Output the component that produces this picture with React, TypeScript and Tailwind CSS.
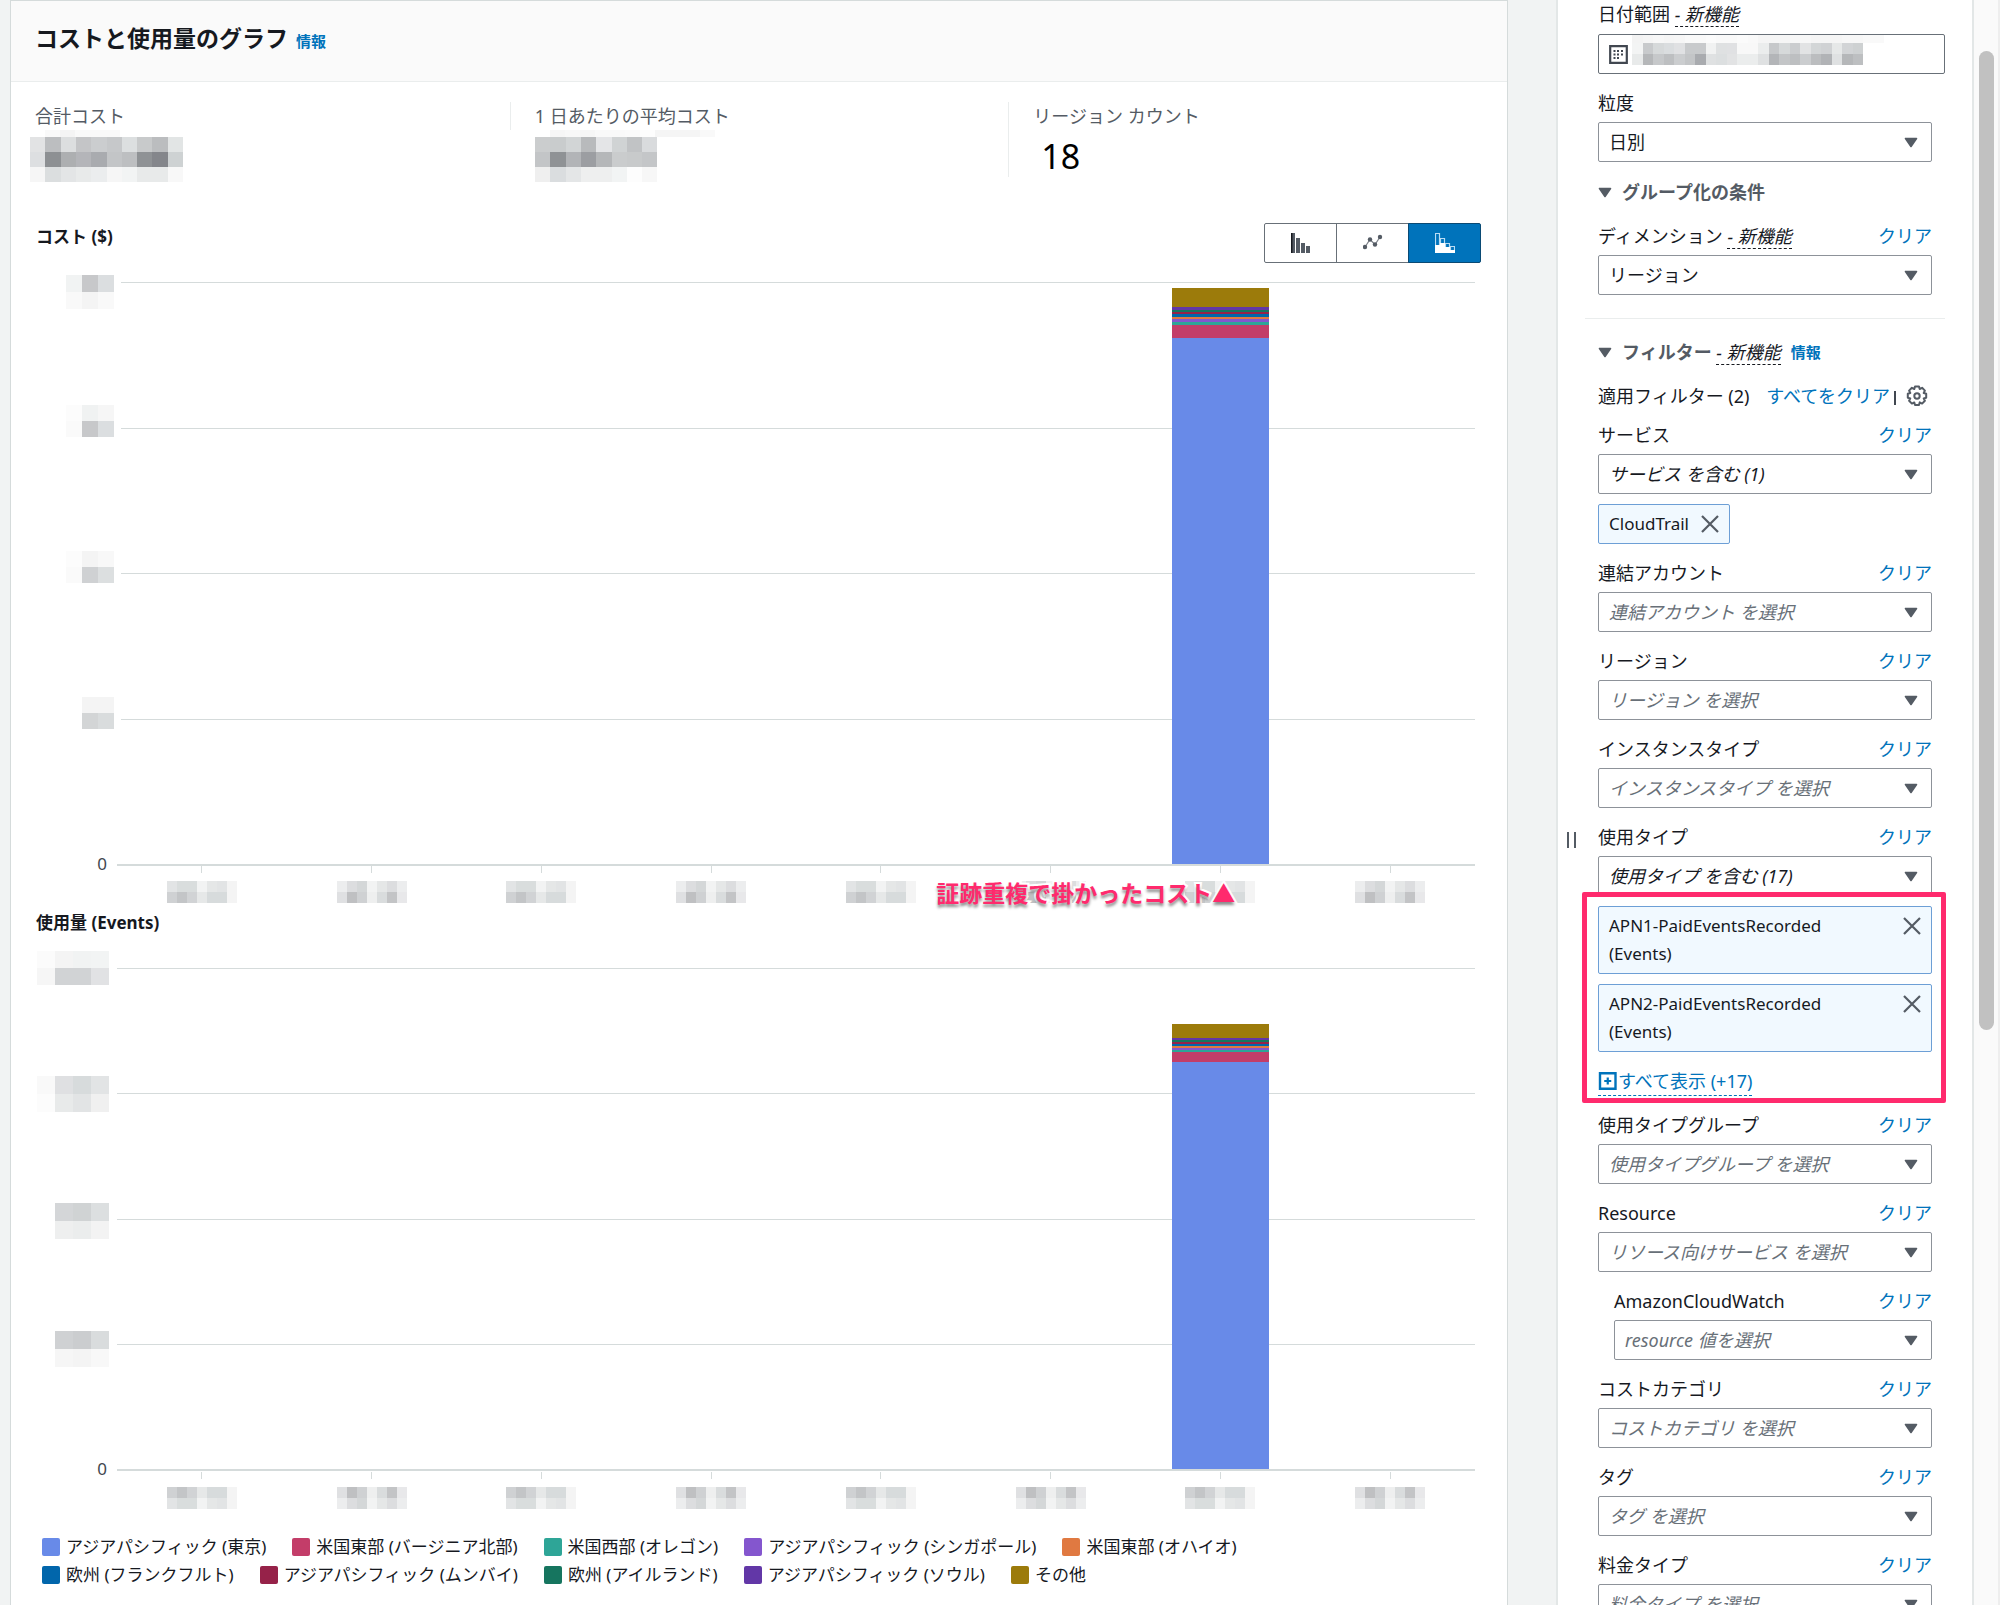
import { useState } from 'react';
import clsx from 'clsx';

type PixelBlock = {
  x: number;
  y: number;
  cellWidth: number;
  cellHeight: number;
  rows: string[][];
};

type Segment = {
  color: string;
  height: number;
};

type Field = {
  id: string;
  label: string;
  value: string;
  filled?: boolean;
  italic?: boolean;
  nested?: boolean;
  tags?: string[];
  showAll?: string;
};

const COLORS = {
  tokyo: '#688ae8',
  virginia: '#c33d69',
  oregon: '#2ea597',
  singapore: '#8456ce',
  ohio: '#e07941',
  frankfurt: '#0166ab',
  mumbai: '#962249',
  ireland: '#16755f',
  seoul: '#6237a7',
  other: '#9c7b0b',
};

const LEGEND = [
  [
    { label: 'アジアパシフィック (東京)', color: COLORS.tokyo },
    { label: '米国東部 (バージニア北部)', color: COLORS.virginia },
    { label: '米国西部 (オレゴン)', color: COLORS.oregon },
    { label: 'アジアパシフィック (シンガポール)', color: COLORS.singapore },
    { label: '米国東部 (オハイオ)', color: COLORS.ohio },
  ],
  [
    { label: '欧州 (フランクフルト)', color: COLORS.frankfurt },
    { label: 'アジアパシフィック (ムンバイ)', color: COLORS.mumbai },
    { label: '欧州 (アイルランド)', color: COLORS.ireland },
    { label: 'アジアパシフィック (ソウル)', color: COLORS.seoul },
    { label: 'その他', color: COLORS.other },
  ],
];

const COST_BAR: Segment[] = [
  { color: COLORS.other, height: 19 },
  { color: COLORS.seoul, height: 3 },
  { color: COLORS.ireland, height: 2 },
  { color: COLORS.mumbai, height: 2 },
  { color: COLORS.frankfurt, height: 3 },
  { color: COLORS.ohio, height: 2 },
  { color: COLORS.singapore, height: 3 },
  { color: COLORS.oregon, height: 3 },
  { color: COLORS.virginia, height: 13 },
  { color: COLORS.tokyo, height: 526 },
];

const USAGE_BAR: Segment[] = [
  { color: COLORS.other, height: 14 },
  { color: COLORS.seoul, height: 2 },
  { color: COLORS.ireland, height: 2 },
  { color: COLORS.mumbai, height: 2 },
  { color: COLORS.frankfurt, height: 2 },
  { color: COLORS.ohio, height: 2 },
  { color: COLORS.singapore, height: 2 },
  { color: COLORS.oregon, height: 2 },
  { color: COLORS.virginia, height: 10 },
  { color: COLORS.tokyo, height: 407 },
];

// masked values
const TOTAL_MASK: PixelBlock[] = [
  { x: 15, y: 0, cellWidth: 15, cellHeight: 7, rows: [['#f9f9f9', '#f4f4f4', '#f9f9f9', '#f9f9f9', '#f9f9f9']] },
  {
    x: 0,
    y: 7,
    cellWidth: 15.3,
    cellHeight: 15,
    rows: [
      ['#e2e3e4', '#bcbec0', '#dcdedf', '#c4c5c7', '#cbcdcf', '#c6c8ca', '#dcdfe0', '#c8cacb', '#bbbdbf', '#e2e5e5'],
      ['#dddfe1', '#8d9093', '#adafb1', '#b4b5b9', '#a9abaf', '#c3c5c7', '#bdbfc1', '#8f9295', '#84868b', '#ced2d3'],
      ['#f6f6f6', '#dbdedf', '#e3e5e6', '#e8eaea', '#ebedee', '#f6f6f6', '#f2f4f4', '#e8eaea', '#e8eaea', '#f8f8f8'],
    ],
  },
];

const AVERAGE_MASK: PixelBlock[] = [
  { x: 15, y: 0, cellWidth: 15, cellHeight: 7, rows: [['#f6f6f6', '#f8f8f8', '#f6f6f6', '#f9f9f9', '#f9f9f9', '#fafafa', '#fdfdfd', '#f5f5f5', '#f5f5f5', '#f5f5f5', '#f9f9f9']] },
  {
    x: 0,
    y: 7,
    cellWidth: 15.3,
    cellHeight: 15,
    rows: [
      ['#cbcdce', '#c9cccd', '#d2d5d6', '#b8babc', '#e4e5e7', '#d0d3d4', '#c1c3c5', '#d9dbdd'],
      ['#c3c5c7', '#8f9295', '#b2b4b7', '#9c9ea2', '#b5b7b9', '#cacccd', '#c8cacb', '#c4c6c8'],
      ['#efefef', '#dadddf', '#e4e6e7', '#eeefef', '#eeefef', '#f2f4f4', '#fdfdfd', '#f7f7f7'],
    ],
  },
];

const DATE_MASK: PixelBlock[] = [
  {
    x: 0,
    y: 0,
    cellWidth: 10.5,
    cellHeight: 8,
    rows: [
      ['#f3f3f3', '#f5f5f5', '#f7f7f7', '#f5f5f5', '#f6f6f6', '#f9f9f9', '#f9f9f9', '#fbfbfb', '#f9f9f9', '#f9f9f9', '#fbfbfb', '#f9f9f9', '#f5f5f5', '#f5f5f5', '#f5f5f5', '#f7f7f7', '#f7f7f7', '#f5f5f5', '#f5f5f5', '#f5f5f5', '#f7f7f7', '#f7f7f7', '#f9f9f9', '#f9f9f9'],
    ],
  },
  {
    x: 0,
    y: 8,
    cellWidth: 10.5,
    cellHeight: 11,
    rows: [
      ['#f3f4f4', '#c8cacc', '#d6d9da', '#dadddf', '#e0e1e3', '#c8cacc', '#c8cacc', '#f1f2f2', '#dfe1e2', '#e0e1e3', '#f8f8f8', '#f8f8f8', '#ebeded', '#c6c8ca', '#d6d9da', '#cbcdcf', '#e2e3e4', '#d3d6d7', '#d0d2d4', '#e6e8e8', '#d2d4d6', '#ced1d2'],
      ['#e8eaea', '#b5b7b9', '#c6c8ca', '#bdbfc1', '#cbcdcf', '#c3c5c7', '#a9abaf', '#dfe1e2', '#dcdfe0', '#e2e3e4', '#ebeded', '#ebeded', '#dfe1e2', '#b3b5b8', '#c3c5c7', '#bdbfc1', '#cbcdcf', '#bbbdbf', '#b1b3b6', '#dfe1e2', '#b5b7b9', '#bdbfc1'],
    ],
  },
];

const COST_AXIS_MASK: PixelBlock[] = [
  { x: 30, y: 0, cellWidth: 16, cellHeight: 17, rows: [['#f1f3f3', '#c7c8ca', '#dbdee0'], ['#f9f9f9', '#f4f4f4', '#f9f9f9']] },
  { x: 30, y: 130, cellWidth: 16, cellHeight: 16, rows: [['#fcfcfc', '#f0f2f2', '#f6f6f6'], ['#fafafa', '#c7c8ca', '#dbdee0']] },
  { x: 30, y: 276, cellWidth: 16, cellHeight: 16, rows: [['#fcfcfc', '#f4f4f4', '#f8f8f8'], ['#fafafa', '#cfd1d3', '#dcdfe0']] },
  { x: 46, y: 422, cellWidth: 16, cellHeight: 16, rows: [['#f4f4f4', '#f4f4f4'], ['#d3d5d6', '#d9dcdd']] },
];

const USAGE_AXIS_MASK: PixelBlock[] = [
  { x: 1, y: 0, cellWidth: 18, cellHeight: 17, rows: [['#fbfbfb', '#f4f4f4', '#f1f3f3', '#f2f4f4'], ['#f6f6f6', '#d1d3d5', '#d1d3d5', '#e1e2e4']] },
  { x: 1, y: 125, cellWidth: 18, cellHeight: 18, rows: [['#f9f9f9', '#dfe0e2', '#d7dbdc', '#e2e4e5'], ['#fcfcfc', '#e8eaea', '#e2e4e5', '#f0f0f0']] },
  { x: 19, y: 252, cellWidth: 18, cellHeight: 18, rows: [['#d4d6d8', '#d0d3d4', '#dcdfe0'], ['#eeefef', '#ebeded', '#f3f3f3']] },
  { x: 19, y: 380, cellWidth: 18, cellHeight: 18, rows: [['#cfd1d3', '#cbcdcf', '#d9dcdd'], ['#f6f6f6', '#f4f4f4', '#f8f8f8']] },
];

const DAY_TOP = [
  ['#e2e4e5', '#d9dddd', '#d9dddd', '#f2f3f3', '#e5e7e7', '#e2e4e5', '#f4f4f4'],
  ['#ecedee', '#dcdddf', '#d4d7d8', '#f2f3f3', '#e5e7e7', '#dcdddf', '#ecedee'],
];

const DAY_BOTTOM = [
  ['#cfd1d3', '#c3c5c7', '#d1d3d5', '#e6e8e8', '#d7dbdc', '#d7dbdc', '#f4f4f4'],
  ['#dfe0e2', '#bfc0c2', '#cfd1d3', '#eeefef', '#d9dcdd', '#c3c4c6', '#e8e8ea'],
];

const DAYS = ['1', '2', '3', '4', '5', '6', '7', '8'];

const FILTERS: Field[] = [
  { id: 'service', label: 'サービス', value: 'サービス を含む (1)', filled: true, italic: true, tags: ['CloudTrail'] },
  { id: 'account', label: '連結アカウント', value: '連結アカウント を選択', italic: true },
  { id: 'region', label: 'リージョン', value: 'リージョン を選択', italic: true },
  { id: 'instance', label: 'インスタンスタイプ', value: 'インスタンスタイプ を選択', italic: true },
  {
    id: 'usage-type',
    label: '使用タイプ',
    value: '使用タイプ を含む (17)',
    filled: true,
    italic: true,
    tags: ['APN1-PaidEventsRecorded (Events)', 'APN2-PaidEventsRecorded (Events)'],
    showAll: 'すべて表示 (+17)',
  },
  { id: 'usage-group', label: '使用タイプグループ', value: '使用タイプグループ を選択', italic: true },
  { id: 'resource', label: 'Resource', value: 'リソース向けサービス を選択', italic: true },
  { id: 'cloudwatch', label: 'AmazonCloudWatch', value: 'resource 値を選択', italic: true, nested: true },
  { id: 'category', label: 'コストカテゴリ', value: 'コストカテゴリ を選択', italic: true },
  { id: 'tag', label: 'タグ', value: 'タグ を選択', italic: true },
  { id: 'charge', label: '料金タイプ', value: '料金タイプ を選択', italic: true },
];

const Mosaic = ({ blocks, width, height }: { blocks: PixelBlock[]; width: number; height: number }) => (
  <svg width={width} height={height} shapeRendering="crispEdges" aria-hidden="true" className="shrink-0">
    {blocks.map((block) =>
      block.rows.map((row, r) =>
        row.map((fill, c) => (
          <rect
            key={`${block.x}-${block.y}-${r}-${c}`}
            x={block.x + c * block.cellWidth}
            y={block.y + r * block.cellHeight}
            width={block.cellWidth}
            height={block.cellHeight}
            fill={fill}
          />
        ))
      )
    )}
  </svg>
);

const Caret = () => (
  <svg width="14" height="11" viewBox="0 0 14 11" aria-hidden="true" className="shrink-0">
    <path d="M1.5 1.5h11L7 9.5z" fill="#545b64" stroke="#545b64" strokeWidth="1.6" strokeLinejoin="round" />
  </svg>
);

const Cross = () => (
  <svg width="18" height="18" viewBox="0 0 18 18" aria-hidden="true">
    <path d="M1 1l16 16M17 1L1 17" fill="none" stroke="#545b64" strokeWidth="2.2" />
  </svg>
);

const BarsIcon = () => (
  <svg width="20" height="20" viewBox="0 0 20 20" aria-hidden="true">
    <path d="M0 0h4v20H0zM5 5h4v15H5zM10 10h4v10h-4zM15 13h4v7h-4z" fill="#545b64" />
    <path d="M0 0h1.5v20H0z" fill="#16191f" />
  </svg>
);

const LineIcon = () => (
  <svg width="20" height="20" viewBox="0 0 20 20" aria-hidden="true">
    <path d="M2 14l5-7.5 5 5L17 4" fill="none" stroke="#7d828a" strokeWidth="1.2" />
    <g fill="#545b64">
      <circle cx="2" cy="14" r="2.2" />
      <circle cx="7" cy="6.5" r="2.2" />
      <circle cx="12" cy="11.5" r="2.2" />
      <circle cx="17" cy="4" r="2.2" />
    </g>
  </svg>
);

const StackIcon = () => (
  <svg width="20" height="20" viewBox="0 0 20 20" aria-hidden="true">
    <path
      d="M.5.5h4v19h-4zM5.5 5.5h4v14h-4zM10.500 10.500h4v9h-4zM15.500 13.500h4v6h-4z"
      fill="none"
      stroke="#b9dbf3"
      strokeWidth="1.2"
    />
    <path d="M0 12h5v8H0zM5 10h5v10H5zM10 14h5v6h-5zM15 17h5v3h-5z" fill="#fff" />
  </svg>
);

const NewFeature = () => (
  <span className="border-b border-dashed border-[#16191f] font-normal text-[#16191f] italic">
    - 新機能
  </span>
);

const ClearButton = ({ label = 'クリア' }: { label?: string }) => (
  <button type="button" className="text-[#0073bb]">
    {label}
  </button>
);

const Select = ({ field }: { field: Field }) => (
  <div className="relative">
    <select
      id={field.id}
      defaultValue=""
      className={clsx(
        'block h-10 w-full appearance-none rounded-xs border border-[#8d9299] bg-white px-2.5 pr-10',
        field.italic && 'italic',
        field.filled || !field.italic ? 'text-[#16191f]' : 'text-[#687078]'
      )}
    >
      <option value="">{field.value}</option>
    </select>
    <span className="pointer-events-none absolute inset-y-0 right-3.5 flex items-center">
      <Caret />
    </span>
  </div>
);

const Tags = ({ tags, showAll }: { tags: string[]; showAll?: string }) => (
  <div className="relative mt-2.5">
    <ul className="flex flex-col items-start gap-2.5 text-[17px]">
      {tags.map((tag) => (
        <li
          key={tag}
          className={clsx(
            'flex items-start justify-between gap-3 rounded-xs border border-[#6d9fd6] bg-[#f1f9ff] px-2.5 py-[5px] leading-7',
            showAll && 'w-full'
          )}
        >
          <span className={clsx(showAll && 'w-60')}>{tag}</span>
          <button type="button" aria-label={`${tag} を削除`} className="flex h-7 items-center">
            <Cross />
          </button>
        </li>
      ))}
    </ul>
    {showAll && (
      <>
        <button
          type="button"
          className="mt-[15px] flex h-[29px] items-center border-b border-dashed border-[#0073bb] text-[#0073bb]"
        >
          <svg width="20" height="18" viewBox="0 0 20 18" aria-hidden="true">
            <path d="M2 1.200h15.500v15.500H2z" fill="none" stroke="#0073bb" strokeWidth="2.400" />
            <path d="M9.750 5.500v7M6.250 9h7" fill="none" stroke="#0073bb" strokeWidth="2.200" />
          </svg>
          {showAll}
        </button>
        {/* highlight frame */}
        <div className="pointer-events-none absolute -top-3.5 -right-3.5 -bottom-[7px] -left-4 rounded-xs border-5 border-[#ff2a6d]" />
      </>
    )}
  </div>
);

const FilterField = ({ field }: { field: Field }) => (
  <div className={clsx('flex flex-col', field.nested && 'pl-4')}>
    <div className="mb-[5px] flex justify-between">
      <label htmlFor={field.id}>{field.label}</label>
      <ClearButton />
    </div>
    <Select field={field} />
    {field.tags && <Tags tags={field.tags} showAll={field.showAll} />}
  </div>
);

const DayLabels = ({ rows, annotation }: { rows: string[][][]; annotation?: string }) => (
  <ul className="grid grid-cols-8">
    {DAYS.map((day, i) => (
      <li key={day} className="relative flex flex-col items-center">
        <span className="h-[7px] w-px bg-[#d5dbdb]" />
        <div className="pt-2">
          <Mosaic
            width={74}
            height={22}
            blocks={[
              { x: 2, y: 0, cellWidth: 10, cellHeight: 11, rows: [rows[0][i % 2], rows[1][i % 2]] },
            ]}
          />
        </div>
        {annotation && i === 6 && (
          <strong className="absolute top-2.5 right-[70px] font-['Noto_Sans_CJK_JP',sans-serif] text-[23px] leading-8 whitespace-nowrap text-[#ff2a6d] [paint-order:stroke_fill] [-webkit-text-stroke:4px_white] [text-shadow:0_3px_3px_rgb(0_0_0/0.45)]">
            {annotation}
          </strong>
        )}
      </li>
    ))}
  </ul>
);

const Plot = ({ segments, className, inset }: { segments: Segment[]; className: string; inset?: boolean }) => (
  <div className={clsx('grid border-b-2 border-[#d5dbdb]', className)}>
    <div className={clsx('col-start-1 row-start-1 grid grid-rows-4', inset && 'ml-1')}>
      <div className="border-t border-[#d5dbdb]" />
      <div className="border-t border-[#d5dbdb]" />
      <div className="border-t border-[#d5dbdb]" />
      <div className="border-t border-[#d5dbdb]" />
    </div>
    <div className="col-start-1 row-start-1 grid grid-cols-8">
      <div className="col-start-7 flex flex-col items-center justify-end">
        {segments.map(({ color, height }) => (
          <div key={color} className="w-[57%]" style={{ height, backgroundColor: color }} />
        ))}
      </div>
    </div>
  </div>
);

const CHART_TYPES = [
  { id: 'bar', label: '棒グラフ', icon: <BarsIcon /> },
  { id: 'line', label: '折れ線グラフ', icon: <LineIcon /> },
  { id: 'stack', label: '積み上げ棒グラフ', icon: <StackIcon /> },
];

const GraphPanel = () => {
  const [chartType, setChartType] = useState<string>('stack');

  return (
    <main className="min-w-0 flex-1 border-x border-t border-[#d5dbdb] bg-white">
      <header className="flex h-[81px] items-baseline gap-2 border-b border-[#eaeded] bg-[#fafafa] px-6 pt-[19px]">
        <h1 className="text-[23px] leading-9 font-bold">コストと使用量のグラフ</h1>
        <a href="#info" className="text-[15px] font-bold text-[#0073bb]">
          情報
        </a>
      </header>

      {/* STATS */}
      <dl className="mt-5 grid h-[82px] grid-cols-3 text-[#545b64]">
        <div className="pl-6">
          <dt className="leading-7">合計コスト</dt>
          <dd className="-ml-[5px]">
            <Mosaic blocks={TOTAL_MASK} width={154} height={52} />
          </dd>
        </div>
        <div className="flex items-start">
          <span className="h-7 w-px bg-[#eaeded]" />
          <div className="pl-6">
            <dt className="leading-7">1 日あたりの平均コスト</dt>
            <dd>
              <Mosaic blocks={AVERAGE_MASK} width={200} height={52} />
            </dd>
          </div>
        </div>
        <div className="flex items-start">
          <span className="h-[75px] w-px bg-[#eaeded]" />
          <div className="pl-6">
            <dt className="leading-7">リージョン カウント</dt>
            <dd className="pt-[3px] pl-2 text-[34px] leading-[46px] text-black">18</dd>
          </div>
        </div>
      </dl>

      {/* COST CHART */}
      <section className="mt-[39px] pr-[26px] pl-[25px]">
        <div className="flex items-start justify-between">
          <h2 className="text-[17px] leading-7 font-bold">コスト ($)</h2>
          <div role="group" aria-label="グラフの種類" className="flex">
            {CHART_TYPES.map(({ id, label, icon }) => (
              <button
                key={id}
                type="button"
                aria-label={label}
                aria-pressed={chartType === id}
                onClick={() => setChartType(id)}
                className={clsx(
                  '-ml-px flex h-10 w-[73px] items-center justify-center border first:rounded-l-xs last:rounded-r-xs',
                  chartType === id ? 'border-[#0a4a74] bg-[#0073bb]' : 'border-[#687078] bg-white'
                )}
              >
                {icon}
              </button>
            ))}
          </div>
        </div>
        <div className="grid grid-cols-[81px_1fr] pt-3 pr-1.5">
          <div className="flex flex-col justify-between">
            <Mosaic blocks={COST_AXIS_MASK} width={78} height={460} />
            <span className="-mb-2.5 pr-2.5 text-right text-[17px] leading-6 text-[#414750]">0</span>
          </div>
          <div className="pt-[7px]">
            <Plot segments={COST_BAR} className="h-[584px]" inset />
          </div>
          <div className="col-start-2 h-9">
            <DayLabels rows={[DAY_TOP, DAY_BOTTOM]} annotation="証跡重複で掛かったコスト▲" />
          </div>
        </div>
      </section>

      {/* USAGE CHART */}
      <section className="mt-[7px] pr-[26px] pl-[25px]">
        <h2 className="text-[17px] leading-7 font-bold">使用量 (Events)</h2>
        <div className="grid grid-cols-[81px_1fr] pt-3.5 pr-1.5">
          <div className="flex flex-col justify-between">
            <Mosaic blocks={USAGE_AXIS_MASK} width={78} height={420} />
            <span className="-mb-2.5 pr-2.5 text-right text-[17px] leading-6 text-[#414750]">0</span>
          </div>
          <div className="pt-[17px]">
            <Plot segments={USAGE_BAR} className="h-[503px]" />
          </div>
          <div className="col-start-2 pt-px">
            <DayLabels rows={[DAY_BOTTOM, DAY_TOP]} />
          </div>
        </div>
      </section>

      {/* LEGEND */}
      <div className="pt-6 pl-[31px] text-[17px]">
        {LEGEND.map((row, i) => (
          <ul key={i} className="flex gap-x-[26px]">
            {row.map(({ label, color }) => (
              <li key={label} className="flex items-center gap-1.5 leading-7">
                <span className="size-[18px] rounded-xs" style={{ backgroundColor: color }} />
                {label}
              </li>
            ))}
          </ul>
        ))}
      </div>
    </main>
  );
};

const Sidebar = () => (
  <aside className="flex w-[418px] shrink-0 overflow-hidden border-x-2 border-[#e3e7e7] bg-white">
    <button
      type="button"
      aria-label="パネルのサイズを変更"
      className="flex w-[27px] shrink-0 items-center justify-center gap-[5px] self-center pt-[74px]"
    >
      <span className="h-4 w-0.5 bg-[#545b64]" />
      <span className="h-4 w-0.5 bg-[#545b64]" />
    </button>
    <div className="min-w-0 flex-1 pr-[27px]">
      <div className="pl-[13px]">
        <label htmlFor="date-range">
          日付範囲 <NewFeature />
        </label>
        <button
          id="date-range"
          type="button"
          className="mt-1.5 flex h-10 w-full items-center rounded-xs border border-[#687078] pl-2.5"
        >
          <svg width="19" height="19" viewBox="0 0 19 19" aria-hidden="true">
            <path d="M1.200 1.200h16.600v16.600H1.200z" fill="none" stroke="#414750" strokeWidth="2.200" />
            <path
              d="M8 5h2v2H8zM12 5h2v2h-2zM4.500 8.500h2v2h-2zM8 8.500h2v2H8zM12 8.500h2v2h-2zM4.500 12h2v2h-2zM8 12h2v2H8zM4.500 5h2v2h-2z"
              fill="#414750"
            />
          </svg>
          <span className="-mt-2 pl-1">
            <Mosaic blocks={DATE_MASK} width={264} height={31} />
          </span>
        </button>
      </div>
      <div className="px-[13px]">
        <label htmlFor="granularity" className="mt-[15px] mb-[5px] block">
          粒度
        </label>
        <Select field={{ id: 'granularity', label: '粒度', value: '日別' }} />
        <h2 className="mt-4">
          <button type="button" className="flex items-center gap-2.5 font-bold text-[#545b64]">
            <Caret />
            グループ化の条件
          </button>
        </h2>
        <div className="mt-4 mb-[5px] flex justify-between">
          <label htmlFor="dimension">
            ディメンション <NewFeature />
          </label>
          <ClearButton />
        </div>
        <Select field={{ id: 'dimension', label: 'ディメンション', value: 'リージョン' }} />
      </div>
      <hr className="mt-[23px] border-[#eaeded]" />
      <div className="px-[13px]">
        <div className="mt-[19px] flex items-center">
          <h2>
            <button type="button" className="flex items-center gap-2.5 font-bold text-[#545b64]">
              <Caret />
              <span>
                フィルター <NewFeature />
              </span>
            </button>
          </h2>
          <a href="#filter-info" className="pl-2.5 text-[15px] font-bold text-[#0073bb]">
            情報
          </a>
        </div>
        <div className="mt-4 flex items-center">
          <span>適用フィルター (2)</span>
          <span className="ml-auto flex items-center gap-1 pr-1">
            <ClearButton label="すべてをクリア" />
            <span className="mt-1 h-3.5 w-0.5 bg-[#414750]" />
            <button type="button" aria-label="設定" className="pl-1.5">
              <svg width="22" height="22" viewBox="0 0 22 22" aria-hidden="true">
                <path
                  d="M9 1.500h4l.7 2.500 2.400-1.200 2.800 2.800-1.200 2.400 2.500.7v4l-2.500.7 1.200 2.400-2.800 2.800-2.400-1.200-.7 2.500H9l-.7-2.500-2.400 1.200-2.800-2.800 1.200-2.400-2.500-.7v-4l2.500-.7-1.200-2.400 2.800-2.800L8.300 4z"
                  fill="none"
                  stroke="#545b64"
                  strokeWidth="2"
                  strokeLinejoin="round"
                />
                <circle cx="11" cy="11" r="2.700" fill="none" stroke="#545b64" strokeWidth="2" />
              </svg>
            </button>
          </span>
        </div>
        <div className="mt-[11px] flex flex-col gap-[15px]">
          {FILTERS.map((field) => (
            <FilterField key={field.id} field={field} />
          ))}
        </div>
      </div>
    </div>
  </aside>
);

const App = () => (
  <div className="flex h-screen overflow-hidden bg-[#f1f3f3] pl-2.5 font-['Noto_Sans','Noto_Sans_CJK_JP',sans-serif] text-lg leading-7 text-[#16191f]">
    <GraphPanel />
    <div className="w-12 shrink-0" />
    <Sidebar />
    {/* scroll track */}
    <div className="flex w-[26px] shrink-0 justify-center border-r-2 border-[#eeeeee] bg-[#fafafa] pt-[51px]">
      <div className="h-[63%] w-[15px] rounded-full bg-[#c1c1c1]" />
    </div>
  </div>
);

export default App;
